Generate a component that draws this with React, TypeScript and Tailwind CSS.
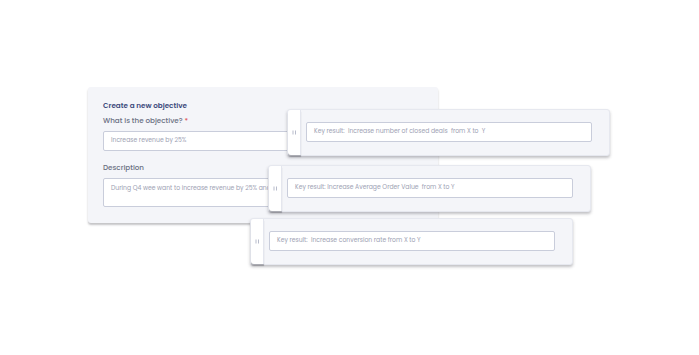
import React from "react";

function Handle() {
  return (
    <div className="w-[13px] self-stretch bg-white border-r border-[#e4e6ee] flex items-center justify-center rounded-l-[3px] shadow-[0_2px_1px_rgba(60,60,70,0.35)]">
      <svg width="5" height="5" viewBox="0 0 5 5">
        <rect x="0.5" y="0.5" width="1" height="4" fill="#b8bccb" />
        <rect x="3" y="0.5" width="1" height="4" fill="#b8bccb" />
      </svg>
    </div>
  );
}

function KeyCard({ text, left, top }: { text: string; left: number; top: number }) {
  return (
    <div
      className="absolute w-[323px] h-[47px] flex bg-[#f4f5f9] rounded-[3px] border border-[#e6e8ef] shadow-[0_2px_3px_rgba(50,50,60,0.3)]"
      style={{ left, top }}
    >
      <Handle />
      <div className="flex-1 pl-[5px] pr-[17px] pt-[12px]">
        <div className="h-[20px] bg-white border border-[#c9cddb] rounded-[2px] flex items-center pl-[7px] text-[6.1px] text-[#9da1b3] whitespace-pre">
          {text}
        </div>
      </div>
    </div>
  );
}

export default function App() {
  return (
    <div
      className="relative w-[699px] h-[355px] bg-white overflow-hidden"
      style={{ fontFamily: "Poppins, Inter, 'Open Sans', sans-serif" }}
    >
      <div className="absolute left-[88px] top-[87px] w-[350px] h-[136px] bg-[#f4f5f9] rounded-[3px] shadow-[0_2px_2px_rgba(60,60,70,0.3)] pl-[15px] pt-[14px]">
        <div className="text-[7.2px] font-semibold text-[#3c4a7c] leading-[10px]">Create a new objective</div>
        <div className="mt-[5px] text-[7.2px] font-medium text-[#6a6f82] leading-[10px]">
          What is the objective? <span className="text-[#e05a5a]">*</span>
        </div>
        <div className="mt-[5px] w-[200px] h-[20px] bg-white border border-[#c9cddb] rounded-[2px] flex items-center pl-[7px] text-[6.1px] text-[#9da1b3]">
          Increase revenue by 25%
        </div>
        <div className="mt-[12px] text-[7.2px] font-medium text-[#6a6f82] leading-[10px]">Description</div>
        <div className="mt-[5px] w-[200px] h-[29px] bg-white border border-[#c9cddb] rounded-[2px] pl-[7px] pt-[5px] text-[6.1px] text-[#9da1b3] whitespace-nowrap">
          During Q4 wee want to increase revenue by 25% and
        </div>
      </div>
      <KeyCard left={287} top={109} text="Key result:  Increase number of closed deals  from X to  Y" />
      <KeyCard left={268} top={165} text="Key result: Increase Average Order Value  from X to Y" />
      <KeyCard left={250} top={218} text="Key result:  Increase conversion rate from X to Y" />
    </div>
  );
}
